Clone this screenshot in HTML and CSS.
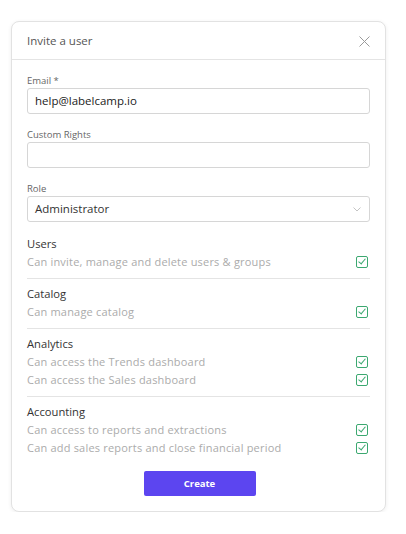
FILE: index.html
```html
<!DOCTYPE html>
<html lang="en">
<head>
<meta charset="utf-8">
<title>Invite a user</title>
<link rel="stylesheet" href="styles.css">
</head>
<body>
<div class="card">
  <div class="card-header">
    <span class="card-title">Invite a user</span>
    <svg class="close" width="11" height="11" viewBox="0 0 11 11"><path d="M0.5 0.5 L10.5 10.5 M10.5 0.5 L0.5 10.5" stroke="#9a9a9a" stroke-width="1" fill="none"/></svg>
  </div>
  <div class="card-body">
    <div class="field">
      <div class="label">Email *</div>
      <div class="input">help@labelcamp.io</div>
    </div>
    <div class="field">
      <div class="label">Custom Rights</div>
      <div class="input"></div>
    </div>
    <div class="field">
      <div class="label">Role</div>
      <div class="input select">
        <span class="select-value">Administrator</span>
        <svg class="chevron" width="8" height="5" viewBox="0 0 8 5"><path d="M0.5 0.5 L4 4 L7.5 0.5" stroke="#c4c4c4" stroke-width="1" fill="none"/></svg>
      </div>
    </div>

    <div class="section first">
      <div class="section-title">Users</div>
      <div class="perm"><span>Can invite, manage and delete users &amp; groups</span><i class="check"></i></div>
    </div>
    <div class="section">
      <div class="section-title">Catalog</div>
      <div class="perm"><span>Can manage catalog</span><i class="check"></i></div>
    </div>
    <div class="section">
      <div class="section-title">Analytics</div>
      <div class="perm"><span>Can access the Trends dashboard</span><i class="check"></i></div>
      <div class="perm"><span>Can access the Sales dashboard</span><i class="check"></i></div>
    </div>
    <div class="section last">
      <div class="section-title">Accounting</div>
      <div class="perm"><span>Can access to reports and extractions</span><i class="check"></i></div>
      <div class="perm"><span>Can add sales reports and close financial period</span><i class="check"></i></div>
    </div>

    <div class="actions">
      <button class="btn">Create</button>
    </div>
  </div>
</div>
</body>
</html>
```
FILE: styles.css
```css
* { box-sizing: border-box; }
html, body { margin: 0; background: #ffffff; }
body {
  padding: 21px 0 0 11px;
  font-family: "Open Sans", "Liberation Sans", sans-serif;
  color: #333;
}
.card {
  width: 375px;
  height: 491px;
  border: 1px solid #e2e2e2;
  border-radius: 8px;
  box-shadow: 0 1px 4px rgba(0,0,0,0.07);
  background: #fff;
}
.card-header {
  height: 38px;
  border-bottom: 1px solid #e4e4e4;
  display: flex;
  align-items: center;
  justify-content: space-between;
  padding: 0 15px 0 15px;
}
.card-title {
  font-size: 11.5px;
  color: #555;
}
.close { display: block; margin-top: 1px; }
.card-body {
  padding: 14px 15px 0 15px;
}
.field { margin-bottom: 14px; }
.label {
  font-size: 9.5px;
  line-height: 14px;
  color: #666;
}
.input {
  height: 26px;
  border: 1px solid #d6d6d6;
  border-radius: 3px;
  padding: 0 7px;
  font-size: 11.5px;
  line-height: 24px;
  color: #222;
}
.select {
  display: flex;
  align-items: center;
  justify-content: space-between;
  padding-right: 8px;
}
.select-value { font-weight: 500; color: #333; }
.chevron { display: block; }
.section {
  border-top: 1px solid #e4e4e4;
  padding: 6px 0 7px 0;
}
.section.first { border-top: none; padding-top: 0; margin-top: -1px; }
.section.last { padding-bottom: 0; }
.section-title {
  font-size: 11.2px;
  line-height: 18px;
  color: #333;
}
.perm {
  display: flex;
  align-items: center;
  justify-content: space-between;
  font-size: 11px;
  line-height: 18px;
  color: #ababab;
  letter-spacing: 0.2px;
}
.check {
  width: 12px;
  height: 12px;
  margin-right: 2px;
  border: 1px solid #3ba870;
  border-radius: 2px;
  position: relative;
}
.check::after {
  content: "";
  position: absolute;
  left: 3px;
  top: 0px;
  width: 3px;
  height: 6px;
  border-right: 1px solid #3ba870;
  border-bottom: 1px solid #3ba870;
  transform: rotate(40deg);
}
.actions {
  display: flex;
  justify-content: center;
  padding-top: 14px;
}
.btn {
  width: 112px;
  height: 25px;
  border: none;
  border-radius: 2px;
  background: #5c45f0;
  color: #fff;
  font-family: inherit;
  font-size: 9.5px;
  font-weight: 700;
  margin-left: 2px;
}
```
